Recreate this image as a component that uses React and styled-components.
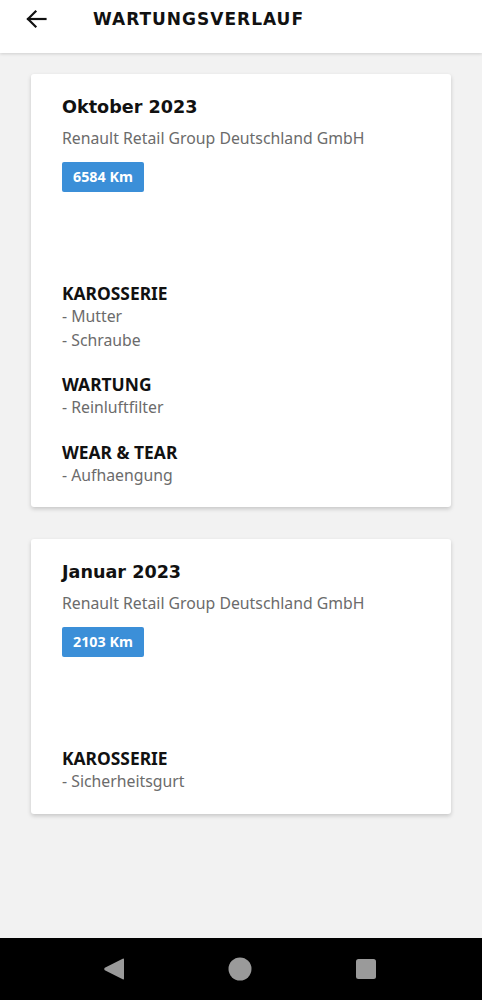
import React from "react"
import styled, { createGlobalStyle } from "styled-components"

const GlobalStyle = createGlobalStyle`
  html, body {
    margin: 0;
    padding: 0;
    background: #f2f2f2;
  }
  * { box-sizing: border-box; }
`

const Screen = styled.div`
  width: 482px;
  height: 1000px;
  display: flex;
  flex-direction: column;
  background: #f2f2f2;
  font-family: "Noto Sans", "Open Sans", sans-serif;
`

const Header = styled.div`
  height: 53px;
  flex-shrink: 0;
  background: #fff;
  display: flex;
  align-items: center;
  padding: 0 0 16px 24px;
  box-shadow: 0 1px 3px rgba(0, 0, 0, 0.15);
  position: relative;
  z-index: 1;
`

const BackButton = styled.button`
  width: 24px;
  height: 24px;
  padding: 0;
  border: none;
  background: none;
  display: flex;
  align-items: center;
  justify-content: center;
`

const Title = styled.h1`
  margin: 0 0 0 45px;
  font-family: "DejaVu Sans", sans-serif;
  font-weight: bold;
  font-size: 17px;
  letter-spacing: 1px;
  color: #111;
`

const Content = styled.div`
  flex: 1;
  padding: 21px 31px 0;
  display: flex;
  flex-direction: column;
  gap: 32px;
`

const Card = styled.div`
  background: #fff;
  border-radius: 3px;
  box-shadow: 0 2px 4px rgba(0, 0, 0, 0.18);
  padding: 18px 31px 20px;
`

const Month = styled.div`
  font-family: "DejaVu Sans", sans-serif;
  font-weight: bold;
  font-size: 17.6px;
  line-height: 30px;
  color: #111;
`

const Dealer = styled.div`
  margin-top: 5px;
  font-size: 15.8px;
  line-height: 22px;
  color: #6b6b6b;
`

const Mileage = styled.div`
  display: inline-block;
  margin-top: 13px;
  background: #3b8fd8;
  color: #fff;
  font-weight: bold;
  font-size: 14.3px;
  line-height: 30px;
  padding: 0 11px;
  border-radius: 2px;
`

const Sections = styled.div`
  margin-top: 89px;
  display: flex;
  flex-direction: column;
  gap: 20px;
`

const Section = styled.div``

const SectionTitle = styled.div`
  font-weight: bold;
  font-size: 17.4px;
  line-height: 24px;
  color: #111;
`

const Item = styled.div`
  font-size: 15.8px;
  line-height: 23.5px;
  color: #6b6b6b;
`

const NavBar = styled.div`
  height: 62px;
  flex-shrink: 0;
  background: #000;
  display: flex;
  align-items: center;
  justify-content: center;
  gap: 102px;
  padding-right: 2px;
`

const NavIcon = styled.svg`
  width: 24px;
  height: 24px;
`

const entries = [
  {
    month: "Oktober 2023",
    km: "6584 Km",
    sections: [
      { title: "KAROSSERIE", items: ["Mutter", "Schraube"] },
      { title: "WARTUNG", items: ["Reinluftfilter"] },
      { title: "WEAR & TEAR", items: ["Aufhaengung"] },
    ],
  },
  {
    month: "Januar 2023",
    km: "2103 Km",
    sections: [{ title: "KAROSSERIE", items: ["Sicherheitsgurt"] }],
  },
]

const App = () => {
  return (
    <Screen>
      <GlobalStyle />
      <Header>
        <BackButton>
          <svg width="24" height="24" viewBox="0 0 24 24" fill="none" stroke="#111" strokeWidth="2.2" strokeLinecap="square">
            <path d="M21.5 12H4" />
            <path d="M11.5 4.5l-7.5 7.5 7.5 7.5" />
          </svg>
        </BackButton>
        <Title>WARTUNGSVERLAUF</Title>
      </Header>
      <Content>
        {entries.map((entry, index) => (
          <Card key={index}>
            <Month>{entry.month}</Month>
            <Dealer>Renault Retail Group Deutschland GmbH</Dealer>
            <Mileage>{entry.km}</Mileage>
            <Sections>
              {entry.sections.map((section, i) => (
                <Section key={i}>
                  <SectionTitle>{section.title}</SectionTitle>
                  {section.items.map((item, j) => (
                    <Item key={j}>- {item}</Item>
                  ))}
                </Section>
              ))}
            </Sections>
          </Card>
        ))}
      </Content>
      <NavBar>
        <NavIcon viewBox="0 0 24 24">
          <path d="M22 2.5 L22 21.5 Q22 23 20.7 22.3 L2.8 13.3 Q1.4 12 2.8 10.7 L20.7 1.7 Q22 1 22 2.5Z" fill="#9a9a9a" />
        </NavIcon>
        <NavIcon viewBox="0 0 24 24">
          <circle cx="12" cy="12" r="11.5" fill="#9a9a9a" />
        </NavIcon>
        <NavIcon viewBox="0 0 24 24">
          <rect x="2" y="2" width="20" height="20" rx="2.5" fill="#9a9a9a" />
        </NavIcon>
      </NavBar>
    </Screen>
  )
}

export default App
